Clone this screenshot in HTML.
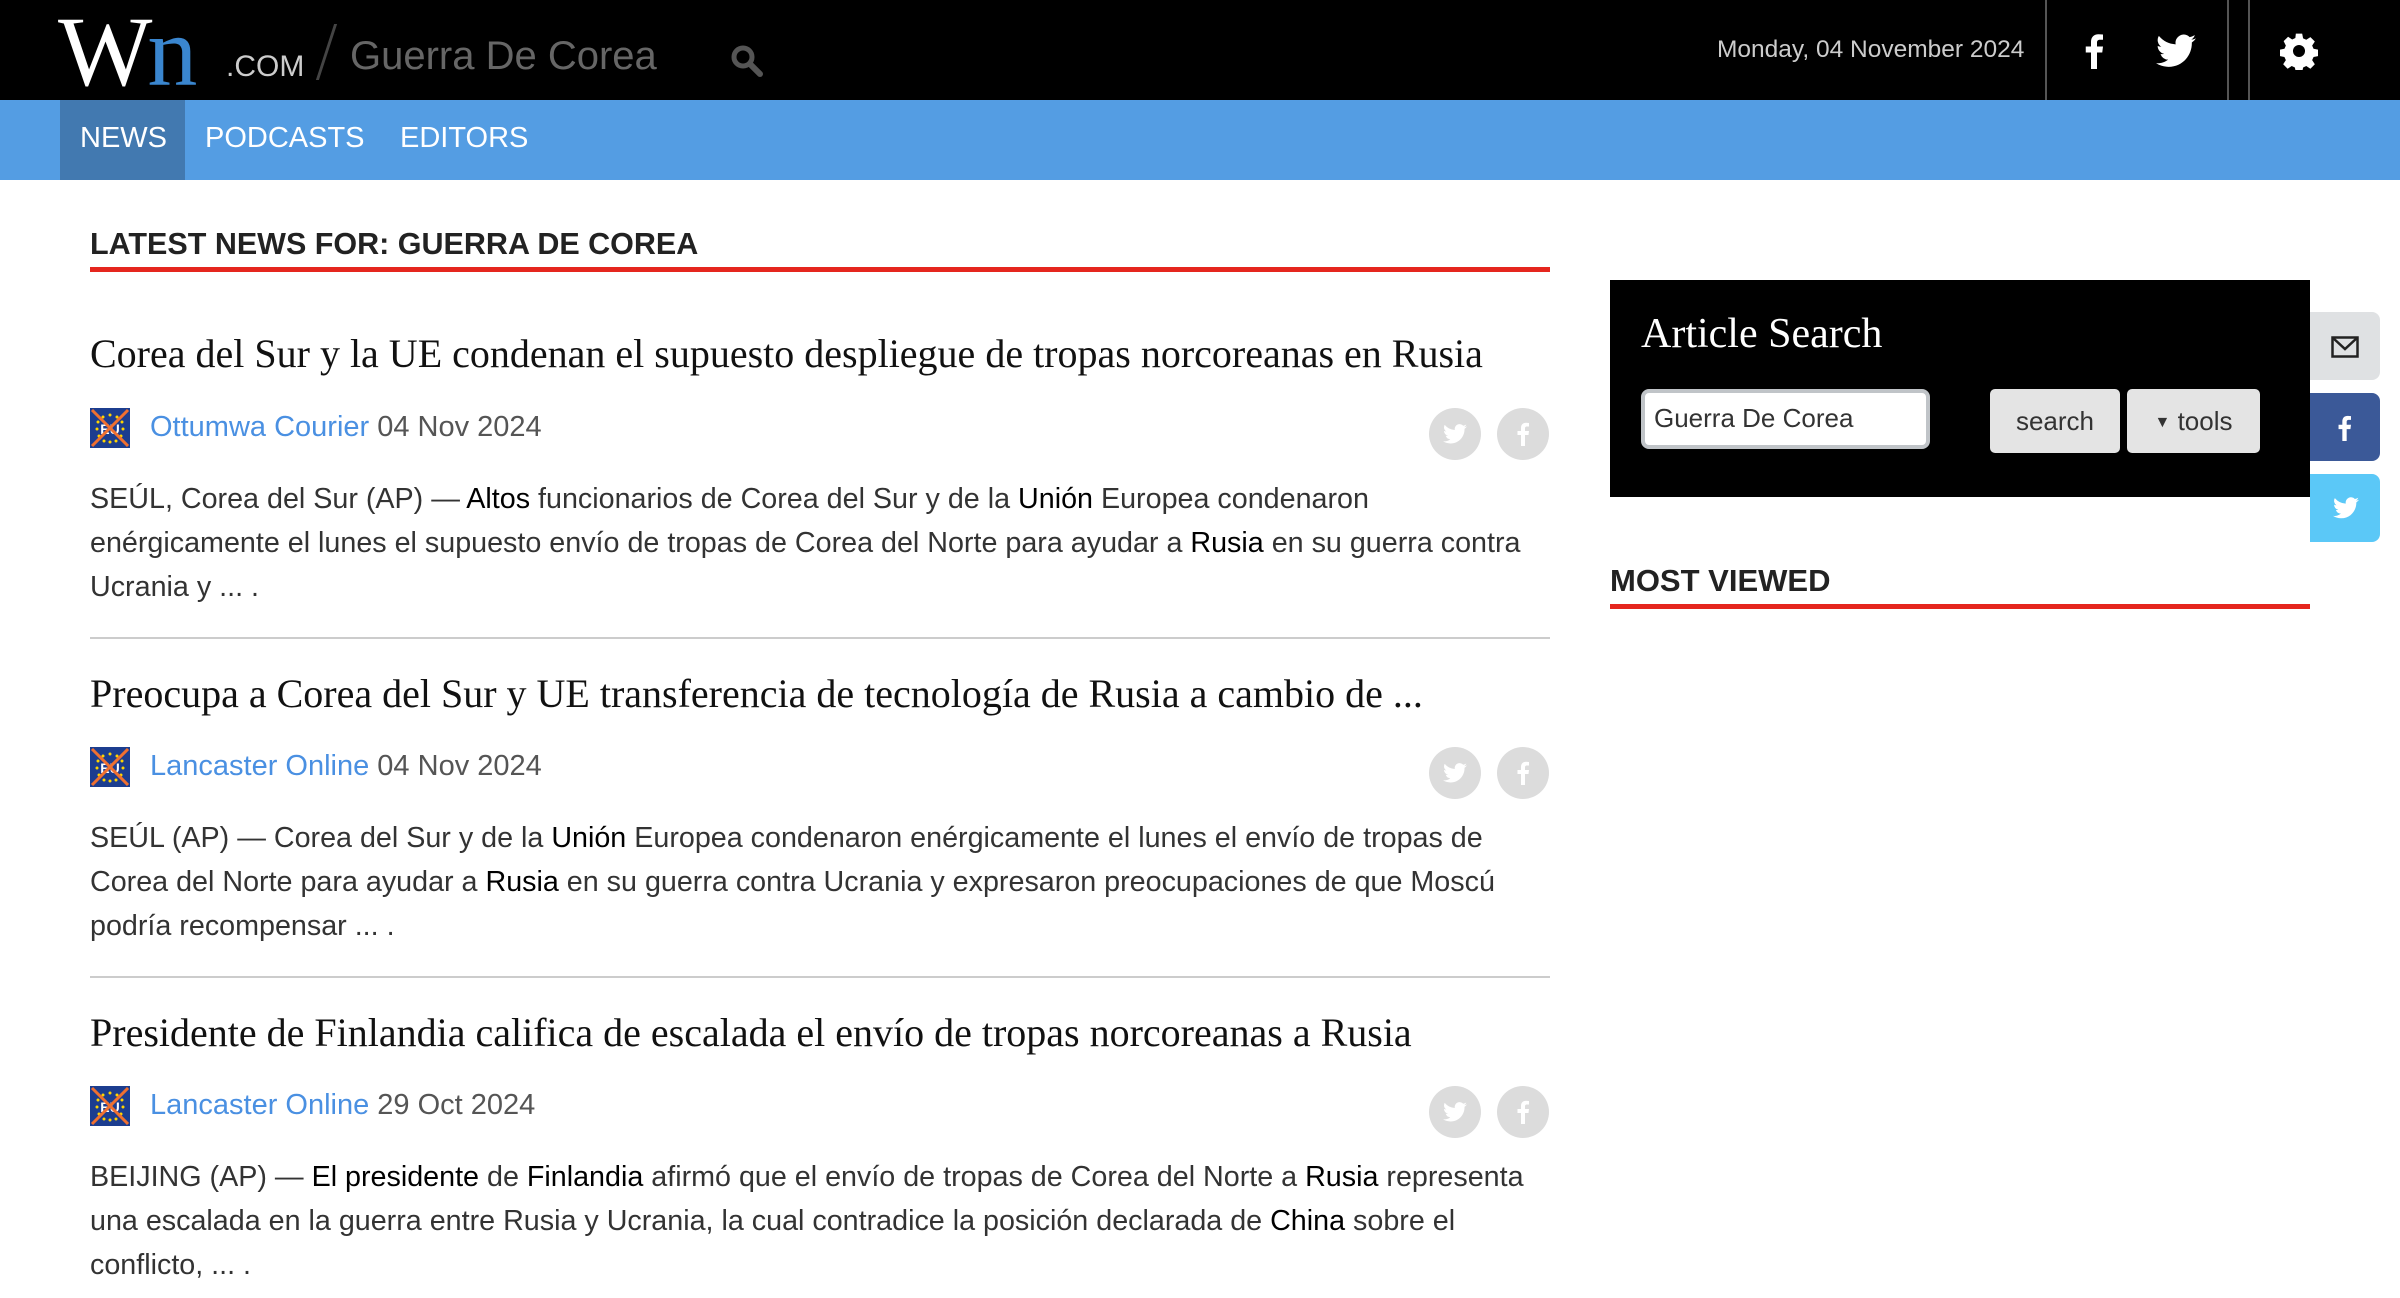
<!DOCTYPE html>
<html><head><meta charset="utf-8"><style>
*{margin:0;padding:0;box-sizing:border-box}
body{width:2400px;height:1298px;background:#fff;font-family:"Liberation Sans",sans-serif;position:relative;overflow:hidden}
.top{position:absolute;left:0;top:0;width:2400px;height:100px;background:#000}
.nav{position:absolute;left:0;top:100px;width:2400px;height:80px;background:#549de3}
.abs{position:absolute;white-space:nowrap}
.navi{color:#fff;font-size:29px;top:122px}
.h{font-weight:bold;font-size:30.5px;color:#222;left:90px;top:227px}
.red{position:absolute;height:5px;background:#e5261e}
.title{position:absolute;left:90px;font-family:"Liberation Serif",serif;font-size:40px;color:#111;white-space:nowrap}
.src{position:absolute;left:150px;font-size:29px;color:#555;white-space:nowrap}
.src a{color:#4a90e2;text-decoration:none}
.flag{position:absolute;left:90px;width:40px;height:40px;background:#1c3d8f;overflow:hidden}
.circ{position:absolute;width:52px;height:52px;border-radius:50%;background:#dcdcdc}
.body{position:absolute;left:90px;font-size:28.7px;color:#333;line-height:44px;white-space:nowrap}
.body b{font-weight:normal;color:#000}
.sep{position:absolute;left:90px;width:1460px;height:2px;background:#ccc}
</style></head><body>
<svg width="0" height="0" style="position:absolute"><defs>
<symbol id="tw" viewBox="0 0 24 20"><path fill="#fff" d="M24 2.4a10 10 0 0 1-2.8.8A5 5 0 0 0 23.3.5a10 10 0 0 1-3.1 1.2A4.9 4.9 0 0 0 11.8 6 14 14 0 0 1 1.700.9a4.9 4.9 0 0 0 1.5 6.6A4.9 4.9 0 0 1 1 6.9a4.9 4.9 0 0 0 3.9 4.8 5 5 0 0 1-2.2.1 4.9 4.9 0 0 0 4.6 3.4A9.9 9.9 0 0 1 0 17.3 14 14 0 0 0 7.5 19.5c9 0 14-7.5 14-14v-.6A10 10 0 0 0 24 2.4z"/></symbol>
<symbol id="fb" viewBox="0 0 12 24"><path fill="#fff" d="M8 24V13h3.5l.5-4H8V6.5C8 5.3 8.4 4.5 10 4.5h2V1a27 27 0 0 0-3-.2C6 .8 4 2.6 4 6v3H.5v4H4v11z"/></symbol>
<symbol id="flag" viewBox="0 0 40 40"><rect width="40" height="40" fill="#1c3d8f"/><g fill="#ffd400"><circle cx="20" cy="7" r="1.5"/><circle cx="27" cy="9" r="1.5"/><circle cx="32" cy="14" r="1.5"/><circle cx="33" cy="21" r="1.5"/><circle cx="31" cy="28" r="1.5"/><circle cx="26" cy="33" r="1.5"/><circle cx="20" cy="34" r="1.5"/><circle cx="14" cy="33" r="1.5"/><circle cx="9" cy="28" r="1.5"/><circle cx="7" cy="21" r="1.5"/><circle cx="8" cy="14" r="1.5"/><circle cx="13" cy="9" r="1.5"/></g><text x="20" y="26" font-family="Liberation Sans" font-weight="bold" font-size="14" fill="#fff" text-anchor="middle">EU</text><path d="M2 2L38 38M38 2L2 38" stroke="#f07030" stroke-width="3"/></symbol>
</defs></svg>
<div class="top"></div>
<div class="abs" style="left:58px;top:-6px;font-family:'Liberation Serif',serif;font-size:100px;color:#fff;letter-spacing:-5px">W<span style="color:#3a86cf">n</span></div>
<div class="abs" style="left:226px;top:50px;color:#ccc;font-size:30px">.COM</div>
<div style="position:absolute;left:325px;top:24px;width:3px;height:56px;background:#444;transform:skewX(-18deg)"></div>
<div class="abs" style="left:350px;top:34px;color:#666;font-size:40px">Guerra De Corea</div>
<svg class="abs" style="left:730px;top:44px" width="34" height="34" viewBox="0 0 34 34"><circle cx="13" cy="13" r="9" stroke="#555" stroke-width="5" fill="none"/><path d="M20 20 L30 30" stroke="#555" stroke-width="6" stroke-linecap="round"/></svg>
<div class="abs" style="left:1717px;top:36px;color:#ccc;font-size:24.5px">Monday, 04 November 2024</div>
<div style="position:absolute;left:2045px;top:0;width:2px;height:100px;background:#555"></div>
<div style="position:absolute;left:2227px;top:0;width:2px;height:100px;background:#555"></div>
<div style="position:absolute;left:2248px;top:0;width:2px;height:100px;background:#555"></div>
<svg class="abs" style="left:2085px;top:32px" width="18" height="38"><use href="#fb"/></svg>
<svg class="abs" style="left:2156px;top:34px" width="40" height="34"><use href="#tw"/></svg>
<svg class="abs" style="left:2280px;top:32px" width="38" height="38" viewBox="0 0 24 24"><path fill="#fff" d="M10 1h4l.6 3 2 .9 2.6-1.7 2.8 2.8-1.7 2.6.9 2 3 .6v4l-3 .6-.9 2 1.7 2.6-2.8 2.8-2.6-1.7-2 .9-.6 3h-4l-.6-3-2-.9-2.6 1.7-2.8-2.8 1.7-2.6-.9-2-3-.6v-4l3-.6.9-2L2.3 5.800 5.1 3l2.6 1.7 2-.9z"/><circle cx="12" cy="12" r="3.8" fill="#000"/></svg>
<div class="nav"></div>
<div style="position:absolute;left:60px;top:100px;width:125px;height:80px;background:#4279b0"></div>
<div class="abs navi" style="left:80px">NEWS</div>
<div class="abs navi" style="left:205px">PODCASTS</div>
<div class="abs navi" style="left:400px">EDITORS</div>

<div class="abs h">LATEST NEWS FOR: GUERRA DE COREA</div>
<div class="red" style="left:90px;top:267px;width:1460px"></div>

<div class="title" style="top:330px">Corea del Sur y la UE condenan el supuesto despliegue de tropas norcoreanas en Rusia</div>
<svg class="flag" style="top:408px" width="40" height="40"><use href="#flag"/></svg>
<div class="src" style="top:411px"><a>Ottumwa Courier</a> 04 Nov 2024</div>
<div class="circ" style="left:1429px;top:408px"><svg style="position:absolute;left:14px;top:16px" width="24" height="20"><use href="#tw"/></svg></div><div class="circ" style="left:1497px;top:408px"><svg style="position:absolute;left:20px;top:14px" width="12" height="24"><use href="#fb"/></svg></div>
<div class="body" style="top:477px">SEÚL, Corea del Sur (AP) — <b>Altos</b> funcionarios de Corea del Sur y de la <b>Unión</b> Europea condenaron<br>enérgicamente el lunes el supuesto envío de tropas de Corea del Norte para ayudar a <b>Rusia</b> en su guerra contra<br>Ucrania y ... .</div>
<div class="sep" style="top:637px"></div>

<div class="title" style="top:670px">Preocupa a Corea del Sur y UE transferencia de tecnología de Rusia a cambio de ...</div>
<svg class="flag" style="top:747px" width="40" height="40"><use href="#flag"/></svg>
<div class="src" style="top:750px"><a>Lancaster Online</a> 04 Nov 2024</div>
<div class="circ" style="left:1429px;top:747px"><svg style="position:absolute;left:14px;top:16px" width="24" height="20"><use href="#tw"/></svg></div><div class="circ" style="left:1497px;top:747px"><svg style="position:absolute;left:20px;top:14px" width="12" height="24"><use href="#fb"/></svg></div>
<div class="body" style="top:816px">SEÚL (AP) — Corea del Sur y de la <b>Unión</b> Europea condenaron enérgicamente el lunes el envío de tropas de<br>Corea del Norte para ayudar a <b>Rusia</b> en su guerra contra Ucrania y expresaron preocupaciones de que Moscú<br>podría recompensar ... .</div>
<div class="sep" style="top:976px"></div>

<div class="title" style="top:1009px">Presidente de Finlandia califica de escalada el envío de tropas norcoreanas a Rusia</div>
<svg class="flag" style="top:1086px" width="40" height="40"><use href="#flag"/></svg>
<div class="src" style="top:1089px"><a>Lancaster Online</a> 29 Oct 2024</div>
<div class="circ" style="left:1429px;top:1086px"><svg style="position:absolute;left:14px;top:16px" width="24" height="20"><use href="#tw"/></svg></div><div class="circ" style="left:1497px;top:1086px"><svg style="position:absolute;left:20px;top:14px" width="12" height="24"><use href="#fb"/></svg></div>
<div class="body" style="top:1155px">BEIJING (AP) — <b>El presidente</b> de <b>Finlandia</b> afirmó que el envío de tropas de Corea del Norte a <b>Rusia</b> representa<br>una escalada en la guerra entre Rusia y Ucrania, la cual contradice la posición declarada de <b>China</b> sobre el<br>conflicto, ... .</div>

<div style="position:absolute;left:1610px;top:280px;width:700px;height:217px;background:#000"></div>
<div class="abs" style="left:1641px;top:310px;color:#fff;font-family:'Liberation Serif',serif;font-size:42px">Article Search</div>
<div style="position:absolute;left:1641px;top:389px;width:289px;height:60px;background:#fff;border:4px solid #c0c4c8;border-radius:8px;font-size:26px;color:#333;padding:10px 0 0 9px">Guerra De Corea</div>
<div style="position:absolute;left:1990px;top:389px;width:130px;height:64px;background:#e4e4e4;border-radius:5px;font-size:26px;color:#333;text-align:center;line-height:64px">search</div>
<div style="position:absolute;left:2127px;top:389px;width:133px;height:64px;background:#e4e4e4;border-radius:5px;font-size:26px;color:#333;text-align:center;line-height:64px"><span style="font-size:16px;vertical-align:middle">▼</span> tools</div>
<div style="position:absolute;left:2310px;top:312px;width:70px;height:68px;background:#dfe1e3;border-radius:0 8px 8px 0"></div>
<svg class="abs" style="left:2331px;top:336px" width="28" height="22" viewBox="0 0 28 22"><rect x="1.5" y="1.5" width="25" height="19" fill="none" stroke="#222" stroke-width="2.5"/><path d="M1.5 1.5 L14 13 L26.5 1.5" fill="none" stroke="#222" stroke-width="2.5"/></svg>
<div style="position:absolute;left:2310px;top:393px;width:70px;height:68px;background:#3b5998;border-radius:0 8px 8px 0"><svg style="position:absolute;left:28px;top:22px" width="13" height="26"><use href="#fb"/></svg></div>
<div style="position:absolute;left:2310px;top:474px;width:70px;height:68px;background:#5bc8f7;border-radius:0 8px 8px 0"></div>
<svg class="abs" style="left:2333px;top:497px" width="26" height="22"><use href="#tw"/></svg>
<div class="abs" style="left:1610px;top:563px;font-weight:bold;font-size:31px;color:#222">MOST VIEWED</div>
<div class="red" style="left:1610px;top:604px;width:700px"></div>
</body></html>
